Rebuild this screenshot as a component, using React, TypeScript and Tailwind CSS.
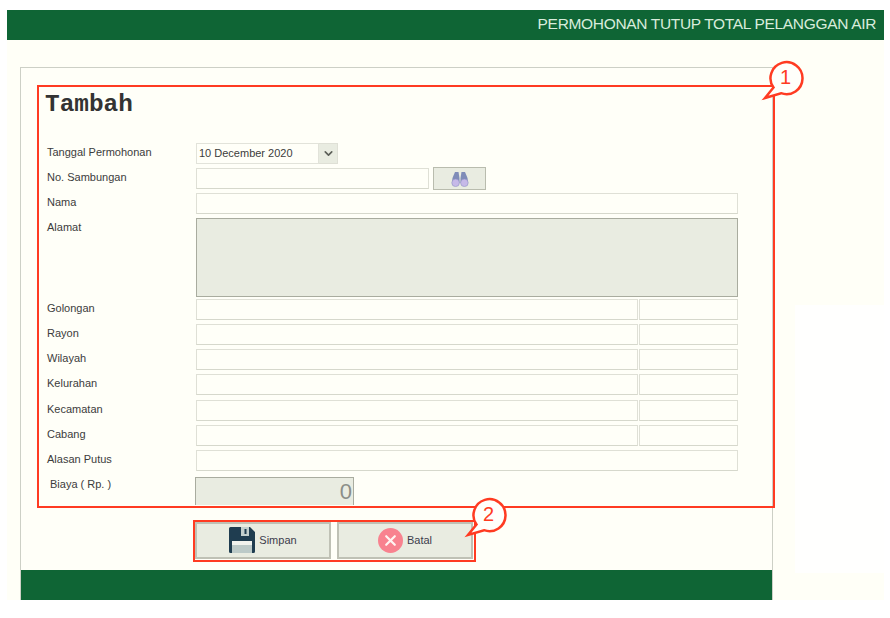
import { ChevronDown } from 'lucide-react';

const FONT = "font-['Liberation_Sans',Arial,sans-serif]";
const FIELD = 'block h-full border border-[#dfe0d6] border-b-[#d6d8cc] bg-[#fffff8] outline-none';

const DOUBLE_ROWS = ['Golongan', 'Rayon', 'Wilayah', 'Kelurahan', 'Kecamatan', 'Cabang'];

function Label({ children }: { children: string }) {
  return <div className="w-[149px] shrink-0 pt-[2px] text-[11px] leading-[14px] text-[#3c3c3c]">{children}</div>;
}

function Floppy() {
  return (
    <svg width="26" height="26" viewBox="0 0 26 26">
      <path d="M1.5 0H21L26 5V24.5A1.5 1.5 0 0 1 24.5 26H1.5A1.5 1.5 0 0 1 0 24.5V1.5A1.5 1.5 0 0 1 1.5 0Z" fill="#1f3d50" />
      <rect x="12" y="0" width="8" height="9" fill="#c3cfcd" />
      <rect x="15.5" y="2" width="2" height="5" fill="#1f3d50" />
      <rect x="3" y="14" width="20" height="12" fill="#f1f3ee" />
      <rect x="3" y="18" width="20" height="8" fill="#bccac8" />
    </svg>
  );
}

function Binoculars() {
  return (
    <svg width="18" height="16" viewBox="0 0 18 16">
      <path d="M4 1H7.5L8.5 7V12H1L1.5 7Z" fill="#7f8cb8" />
      <path d="M10.5 1H14L16.5 7L17 12H9.5V7Z" fill="#7f8cb8" />
      <ellipse cx="4.6" cy="11.8" rx="3.8" ry="3.8" fill="#c6b9e8" stroke="#8f90c4" strokeWidth="0.6" />
      <ellipse cx="13.4" cy="11.8" rx="3.8" ry="3.8" fill="#c6b9e8" stroke="#8f90c4" strokeWidth="0.6" />
    </svg>
  );
}

function CancelIcon() {
  return (
    <svg width="25" height="25" viewBox="0 0 25 25">
      <circle cx="12.5" cy="12.5" r="12.5" fill="#f8828f" />
      <path d="M8.2 8.2L16.8 16.8M16.8 8.2L8.2 16.8" stroke="#fff4f2" strokeWidth="2.2" strokeLinecap="round" />
    </svg>
  );
}

function Callout({ label, className }: { label: string; className: string }) {
  return (
    <svg width="44" height="44" viewBox="0 0 44 44" className={`absolute ${className}`}>
      <path
        d="M12.5 29.5A16 16 0 1 1 20 35.2L4 40Z"
        fill="#fffffb"
        stroke="#ff3b22"
        strokeWidth="2.5"
        strokeLinejoin="miter"
      />
      <text x="24.5" y="26" textAnchor="middle" fontSize="20" fill="#ff3b22" fontFamily="Liberation Sans, Arial, sans-serif">
        {label}
      </text>
    </svg>
  );
}

export default function App() {
  return (
    <div className={`relative h-[618px] w-[890px] overflow-hidden bg-white pl-[7px] pt-[10px] ${FONT}`}>
      <div className="relative h-[590px] w-[877px] bg-[#fffff7]">
        <div className="absolute right-0 top-[295px] h-[268px] w-[89px] bg-[#fffffe]" />

        <header className="flex h-[30px] items-center justify-end bg-[#0f6535] pb-[2px] pr-[8px] text-[15.5px] tracking-[-0.33px] text-[#d8ecdc]">
          PERMOHONAN TUTUP TOTAL PELANGGAN AIR
        </header>

        <div className="relative ml-[13px] mt-[27px] flex h-[533px] w-[753px] flex-col border border-b-0 border-[#cdd0c6] bg-[#fffff8]">
          <div className="pl-[24px] pt-[23px]">
            <h1 className="h-[52px] font-['Liberation_Mono','Courier_New',monospace] text-[24.4px] font-bold leading-[28px] text-[#333333]">
              Tambah
            </h1>

            <div className="flex flex-col gap-[4px] pl-[2px]">
              <div className="flex h-[21px]">
                <Label>Tanggal Permohonan</Label>
                <div className="flex h-[21px]">
                  <div className="flex w-[123px] items-center border border-[#e2e3da] bg-[#fffff8] pl-[2px] text-[11px] text-[#3c3c3c]">
                    10 December 2020
                  </div>
                  <div className="flex w-[19px] items-center justify-center border border-l-0 border-[#dfe0d6] bg-[#e9ece1]">
                    <ChevronDown size={13} strokeWidth={3} className="text-[#5c5f58]" />
                  </div>
                </div>
              </div>

              <div className="flex h-[21px]">
                <Label>No. Sambungan</Label>
                <input readOnly className={`${FIELD} w-[233px]`} />
                <button className="-mt-[1px] ml-[4px] flex h-[23px] w-[53px] items-center justify-center border border-[#b9bcae] bg-[#e9ece1]">
                  <Binoculars />
                </button>
              </div>

              <div className="flex h-[21px]">
                <Label>Nama</Label>
                <input readOnly className={`${FIELD} w-[542px]`} />
              </div>

              <div className="flex h-[77px]">
                <Label>Alamat</Label>
                <div className="h-[79px] w-[542px] border border-[#a9ac9f] bg-[#e9ece1]" />
              </div>

              <div className="flex flex-col gap-[4.17px]">
                {DOUBLE_ROWS.map((name) => (
                  <div key={name} className="flex h-[21px]">
                    <Label>{name}</Label>
                    <input readOnly className={`${FIELD} w-[442px]`} />
                    <input readOnly className={`${FIELD} ml-[1px] w-[99px]`} />
                  </div>
                ))}
                <div className="flex h-[21px]">
                  <Label>Alasan Putus</Label>
                  <input readOnly className={`${FIELD} w-[542px]`} />
                </div>
              </div>

              <div className="mt-[2px] flex h-[28px]">
                <div className="w-[148px] shrink-0 pl-[3px] text-[11px] leading-[14px] text-[#3c3c3c]">Biaya ( Rp. )</div>
                <div className="w-[159px] border border-b-0 border-[#a9ac9f] bg-[#e9ece1] pr-[1px] text-right text-[22px] leading-[28px] text-[#8b8e88]">
                  0
                </div>
              </div>
            </div>

            <div className="ml-[150px] mt-[17px] flex gap-[6px]">
              <button className="flex h-[37px] w-[136px] items-center justify-center gap-[4px] border-2 border-[#bfc1b5] bg-[#e9ece1] text-[11px] text-[#3c3c4c]">
                <Floppy />
                Simpan
              </button>
              <button className="flex h-[37px] w-[136px] items-center justify-center gap-[4px] border-2 border-[#bfc1b5] bg-[#e9ece1] text-[11px] text-[#3c3c4c]">
                <CancelIcon />
                Batal
              </button>
            </div>
          </div>

          <div className="mt-auto h-[30px] bg-[#0f6535]" />

          {/* annotations on top of the form */}
          <div className="absolute left-[16px] top-[17px] h-[423px] w-[738px] border-2 border-[#ff3b22]" />
          <div className="absolute left-[172px] top-[452px] h-[42px] w-[283px] border-2 border-[#ff3b22]" />
          <Callout label="1" className="left-[740px] top-[-10px]" />
          <Callout label="2" className="left-[443px] top-[427px]" />
        </div>
      </div>
    </div>
  );
}
